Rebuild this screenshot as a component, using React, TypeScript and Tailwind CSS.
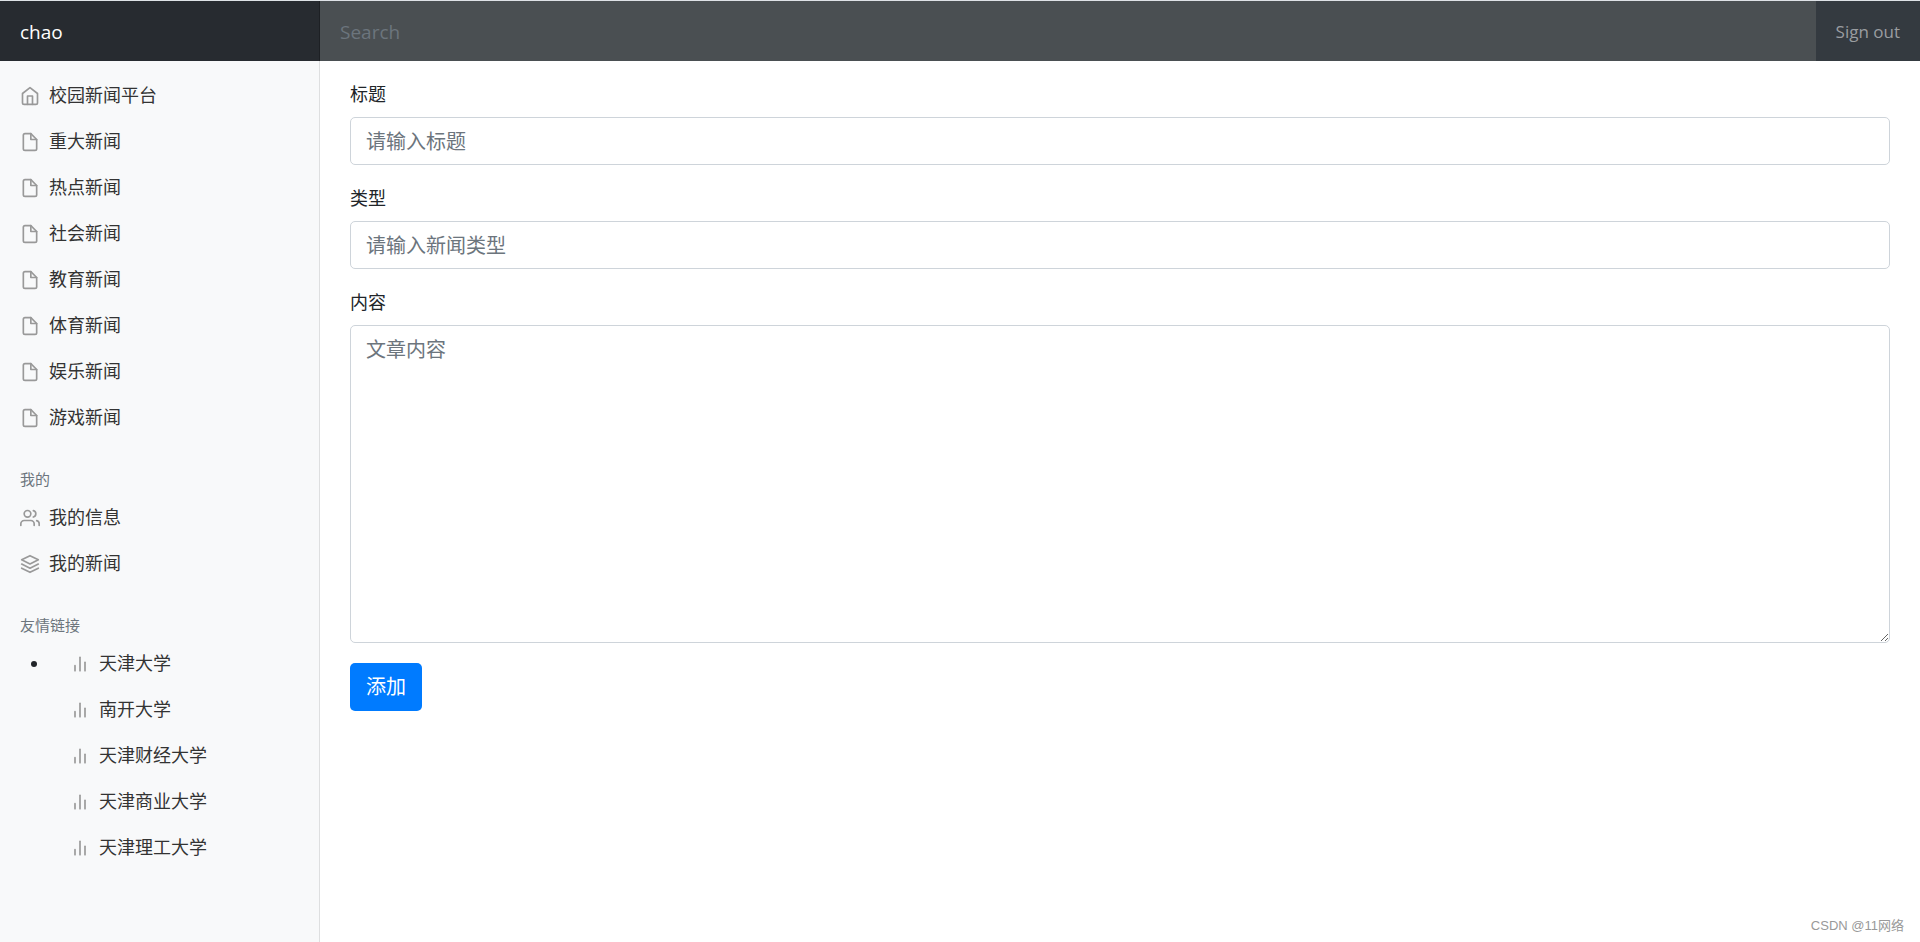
import type { ReactNode } from "react";
import { useState } from "react";

const categories = ["重大新闻", "热点新闻", "社会新闻", "教育新闻", "体育新闻", "娱乐新闻", "游戏新闻"];
const friendLinks = ["天津大学", "南开大学", "天津财经大学", "天津商业大学", "天津理工大学"];

const icons = {
  home: (
    <>
      <path d="M3 9l9-7 9 7v11a2 2 0 0 1-2 2H5a2 2 0 0 1-2-2z" />
      <polyline points="9 22 9 12 15 12 15 22" />
    </>
  ),
  file: (
    <>
      <path d="M13 2H6a2 2 0 0 0-2 2v16a2 2 0 0 0 2 2h12a2 2 0 0 0 2-2V9z" />
      <polyline points="13 2 13 9 20 9" />
    </>
  ),
  users: (
    <>
      <path d="M17 21v-2a4 4 0 0 0-4-4H5a4 4 0 0 0-4 4v2" />
      <circle cx="9" cy="7" r="4" />
      <path d="M23 21v-2a4 4 0 0 0-3-3.87" />
      <path d="M16 3.13a4 4 0 0 1 0 7.75" />
    </>
  ),
  layers: (
    <>
      <polygon points="12 2 2 7 12 12 22 7 12 2" />
      <polyline points="2 17 12 22 22 17" />
      <polyline points="2 12 12 17 22 12" />
    </>
  ),
  bars: (
    <>
      <line x1="18" y1="20" x2="18" y2="10" />
      <line x1="12" y1="20" x2="12" y2="4" />
      <line x1="6" y1="20" x2="6" y2="14" />
    </>
  ),
};

function NavItem({ icon, children }: { icon: keyof typeof icons; children: ReactNode }) {
  return (
    <li className="list-none">
      <a href="#" className="block px-5 pt-[11px] pb-[9px] text-[#333]">
        <svg
          className="mr-[9px] inline-block size-5 align-[-4px] text-[#999]"
          viewBox="0 0 24 24"
          fill="none"
          stroke="currentColor"
          strokeWidth="2"
          strokeLinecap="round"
          strokeLinejoin="round"
          aria-hidden="true"
        >
          {icons[icon]}
        </svg>
        {children}
      </a>
    </li>
  );
}

function NavHeading({ children }: { children: ReactNode }) {
  return <h6 className="mt-[31px] mb-[5px] px-5 text-[15px] leading-[18px] text-[#6c757d]">{children}</h6>;
}

const fieldClass =
  "block w-full rounded-[5px] border border-[#ced4da] bg-white px-[15px] pt-[9px] pb-[7px] text-xl leading-[30px] text-[#495057] placeholder:text-[#6c757d] placeholder:opacity-100";

function Field({ id, label, children }: { id: string; label: string; children: ReactNode }) {
  return (
    <div className="mb-5">
      <label htmlFor={id} className="mb-2.5 block">
        {label}
      </label>
      {children}
    </div>
  );
}

export default function App() {
  const [title, setTitle] = useState("");
  const [type, setType] = useState("");
  const [content, setContent] = useState("");

  return (
    <div className="flex min-h-screen flex-col bg-white font-['Open_Sans','Noto_Sans_CJK_SC',sans-serif] text-[18px] leading-[26px] text-[#212529]">
      <header className="flex border-t border-[#dee2e6] bg-[#343a40]">
        <a
          href="#"
          className="w-1/6 bg-black/25 px-5 pt-4 pb-3.5 text-[19px] leading-[30px] text-white shadow-[inset_-1px_0_0_rgba(0,0,0,0.25)]"
        >
          chao
        </a>
        <input
          type="text"
          aria-label="Search"
          placeholder="Search"
          className="min-w-0 flex-1 bg-[#4a4f52] px-5 pt-4 pb-3.5 text-[19px] leading-[30px] text-white placeholder:text-[#6c757d] placeholder:opacity-100"
        />
        <a href="#" className="px-5 pt-4 pb-3.5 text-[17px] leading-[30px] text-[#9a9da0]">
          Sign out
        </a>
      </header>

      <div className="flex flex-1">
        <nav className="w-1/6 bg-[#f8f9fa] pt-2.5 shadow-[inset_-1px_0_0_rgba(0,0,0,0.1)]">
          <ul>
            <NavItem icon="home">校园新闻平台</NavItem>
            {categories.map((name) => (
              <NavItem key={name} icon="file">
                {name}
              </NavItem>
            ))}
          </ul>

          <NavHeading>我的</NavHeading>
          <ul>
            <NavItem icon="users">我的信息</NavItem>
            <NavItem icon="layers">我的新闻</NavItem>
          </ul>

          <NavHeading>友情链接</NavHeading>
          <ul className="list-disc pl-[50px]">
            <li>
              <ul>
                {friendLinks.map((name) => (
                  <NavItem key={name} icon="bars">
                    {name}
                  </NavItem>
                ))}
              </ul>
            </li>
          </ul>
        </nav>

        <main className="flex flex-1 flex-col px-[30px] pt-5">
          <form onSubmit={(e) => e.preventDefault()}>
            <Field id="title" label="标题">
              <input
                id="title"
                type="text"
                className={fieldClass}
                placeholder="请输入标题"
                value={title}
                onChange={(e) => setTitle(e.target.value)}
              />
            </Field>
            <Field id="type" label="类型">
              <input
                id="type"
                type="text"
                className={fieldClass}
                placeholder="请输入新闻类型"
                value={type}
                onChange={(e) => setType(e.target.value)}
              />
            </Field>
            <Field id="content" label="内容">
              <textarea
                id="content"
                rows={10}
                className={fieldClass}
                placeholder="文章内容"
                value={content}
                onChange={(e) => setContent(e.target.value)}
              />
            </Field>
            <button type="submit" className="rounded-[5px] bg-[#007bff] px-4 py-[9px] text-xl leading-[30px] text-white">
              添加
            </button>
          </form>
          <p className="mt-auto -mr-3.5 pb-1 text-right font-['Liberation_Sans','Noto_Sans_CJK_SC',sans-serif] text-[13px] leading-6 text-[#999]">
            CSDN @11网络
          </p>
        </main>
      </div>
    </div>
  );
}
